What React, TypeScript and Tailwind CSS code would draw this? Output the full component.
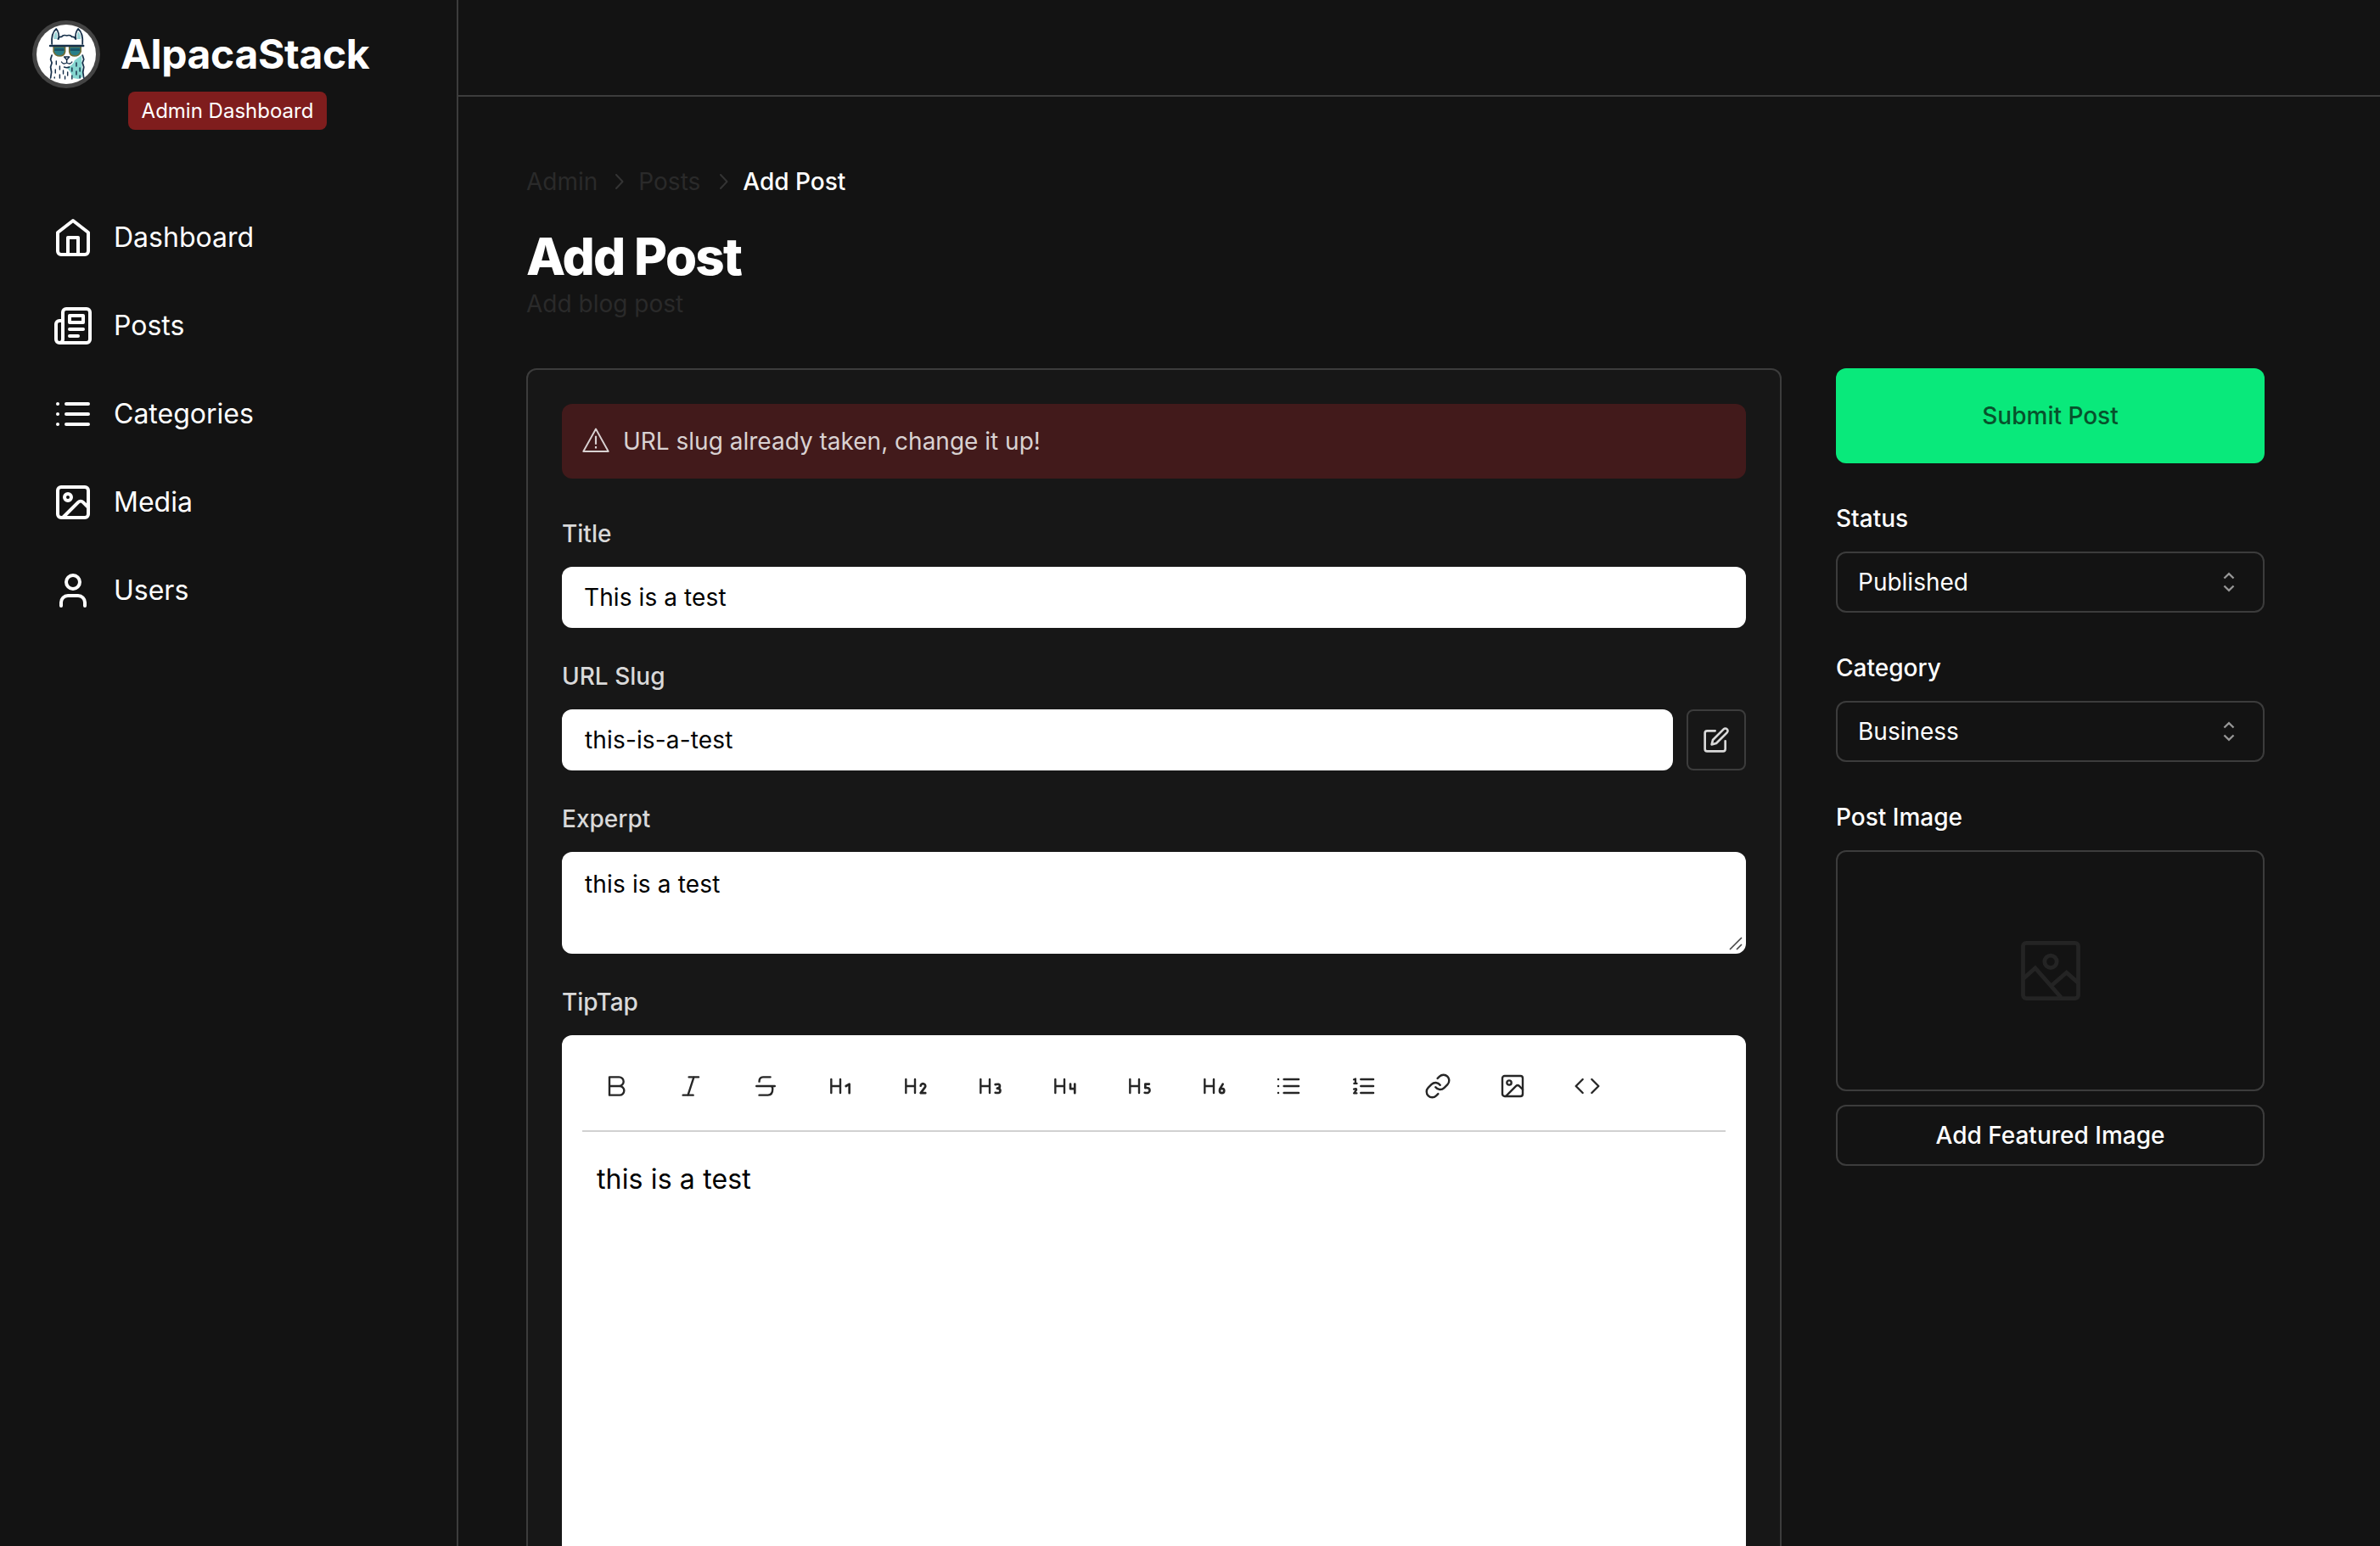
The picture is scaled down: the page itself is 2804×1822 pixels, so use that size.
import React from "react";

const Svg = ({ size, sw = 2, children, cls = "" }: { size: number; sw?: number; children: React.ReactNode; cls?: string }) => (
  <svg width={size} height={size} viewBox="0 0 24 24" fill="none" stroke="currentColor" strokeWidth={sw} strokeLinecap="round" strokeLinejoin="round" className={"shrink-0 " + cls}>
    {children}
  </svg>
);

const ImageShapes = () => (
  <>
    <rect width="18" height="18" x="3" y="3" rx="2" />
    <circle cx="9" cy="9" r="2" />
    <path d="m21 15-3.086-3.086a2 2 0 0 0-2.828 0L6 21" />
  </>
);

const ListShapes = () => <path d="M8 6h13M8 12h13M8 18h13M3 6h.01M3 12h.01M3 18h.01" />;

const Alpaca = () => (
  <svg width="70" height="70" viewBox="0 0 70 70" fill="none" strokeLinecap="round" strokeLinejoin="round">
    <circle cx="35" cy="35" r="35" fill="#fff" />
    <g transform="translate(-.4 0) scale(1.030 1)">
      <path d="M34 50q8-1 10-8l8-6l1 26l-5 2l-6-1q-2-8-8-13z" fill="#86d6d0" />
      <path d="M20 17q0-6 3-9q2 4 1 9zM51 17q0-6-3-9q-2 4-1 9z" fill="#9ad3d6" />
      <g stroke="#16304a" strokeWidth="1.700">
        <path d="M18 23q-1-13 5-18q4 5 2.500 12M53 23q1-13-5-18q-4 5-2.500 12" />
        <path d="M25 17q1-3 4-2.500q2-3 6-1.500q4-1.500 6 1.500q3-.5 4 2.500" />
        <path d="M18 36l-1.500 5l1.500 4l-1.500 5l1 6l-1 7M53 36l1.500 5l-1.500 4l1.500 5l-1 6l1 7" />
      </g>
      <g stroke="#16304a" strokeWidth="1.400">
        <path d="M32 38h6l-3 3.500zM35 42v3M29 44q2 3.500 6 1q4 2.500 6-1M32 50q3 1.500 6 0" />
        <path d="M23 43v4M27 49v4M22 53v4M31 54v4M27 59v4M36 56v4M41 51v4M46 45v4M41 60v4M46 55v4M33 61v3M50 51v4M21 62v1M50 60v3" />
      </g>
      <path d="M20 26h13v6q-1 5-6 5t-7-5zM38 26h13v6q-2 5-7 5t-6-5z" fill="#2a7f88" stroke="#6f6b33" strokeWidth="1.600" />
      <path d="M21 28h11v3h-11zM39 28h11v3h-11z" fill="#1b5468" />
      <path d="M16 25h38" stroke="#16304a" strokeWidth="2.400" />
    </g>
  </svg>
);

const nav = [
  { label: "Dashboard", icon: <><path d="m3 9 9-7 9 7v11a2 2 0 0 1-2 2H5a2 2 0 0 1-2-2z" /><path d="M9 22V12h6v10" /></> },
  { label: "Posts", icon: <><path d="M4 22h16a2 2 0 0 0 2-2V4a2 2 0 0 0-2-2H8a2 2 0 0 0-2 2v16a2 2 0 0 1-2 2Zm0 0a2 2 0 0 1-2-2v-9c0-1.1.9-2 2-2h2" /><path d="M18 14h-8M15 18h-5M10 6h8v4h-8V6Z" /></> },
  { label: "Categories", icon: <ListShapes /> },
  { label: "Media", icon: <ImageShapes /> },
  { label: "Users", icon: <><path d="M19 21v-2a4 4 0 0 0-4-4H9a4 4 0 0 0-4 4v2" /><circle cx="12" cy="7" r="4" /></> },
];

/* Heading levels, drawn beside the H stem in the toolbar icons */
const levels = [
  "M17 12l3-1.800v7.900",
  "M17 11.800a2.100 2 0 1 1 3.700 1.400L17 18.100h4.200",
  "M17 10.600q4-1 4 1.200q0 2-2.400 2.200q2.800.1 2.800 2.100q0 2.600-4.400 1.700",
  "M17.300 10.200v4.200h3.900M21.200 10.200v7.900",
  "M20.900 10.200h-3.400v3.400q3.900-.5 3.900 2.100q0 3-4.400 2.100",
  "M20 10.200l-2.700 4.500M19.200 18.100a2 2 0 1 0 0-4a2 2 0 0 0 0 4z",
];

const tools: { sw: number; icon: React.ReactNode }[] = [
  { sw: 1.8, icon: <path d="M6 4h8.500a4 4 0 0 1 0 8H6zM6 12h9a4 4 0 0 1 0 8H6z" /> },
  { sw: 1.8, icon: <path d="M10.200 4h8.600M5 20h9M14.600 4l-5.200 16" /> },
  { sw: 1.8, icon: <path d="M16.200 4H10Q6.400 4 6.400 8M3.900 12h16.200M15 12h1.500q1.700 0 1.700 2.500Q18.200 20 14 20H6.400" /> },
  ...levels.map((d) => ({ sw: 1.8, icon: <><path d="M4 6v12M12 6v12M4 12h8" /><path d={d} strokeWidth="2" /></> })),
  { sw: 1.9, icon: <ListShapes /> },
  { sw: 1.9, icon: <><path d="M10 6h11M10 12h11M10 18h11" /><path d="M3.800 6.200 5.200 5.600v4M4 9.700h2.400M3.800 14.700q2.600-1 2.200.7L3.900 18.300h2.400" strokeWidth="1.700" /></> },
  { sw: 1.8, icon: <path d="M10 13a5 5 0 0 0 7.540.54l3-3a5 5 0 0 0-7.070-7.070l-1.720 1.710M14 11a5 5 0 0 0-7.540-.54l-3 3a5 5 0 0 0 7.070 7.070l1.710-1.710" /> },
  { sw: 1.8, icon: <ImageShapes /> },
  { sw: 1.8, icon: <path d="m16 18 6-6-6-6M8 6l-6 6 6 6" /> },
];

const Crumb = () => (
  <svg width="30" height="30" viewBox="0 0 15 15" fill="#343434">
    <path d="M6.158 3.135a.5.5 0 0 1 .707.023l3.750 4a.5.5 0 0 1 0 .684l-3.750 4a.5.5 0 1 1-.73-.684L9.566 7.500 6.135 3.842a.5.5 0 0 1 .023-.707Z" />
  </svg>
);

const Label = ({ children, cls = "mt-[45px]" }: { children: string; cls?: string }) => (
  <div className={"mb-[19px] h-10 text-[28px] leading-10 font-medium " + cls}>{children}</div>
);

const Select = ({ value }: { value: string }) => (
  <div className="flex h-[72px] items-center justify-between rounded-xl border-2 border-[#3c3c3c] px-6 text-[28px]">
    <span>{value}</span>
    <svg width="32" height="32" viewBox="0 0 15 15" fill="none" stroke="#969696" strokeWidth="1.100">
      <path d="M4.900 5.400 7.500 2.900 10.100 5.400M4.900 9.600 7.500 12.100 10.100 9.600" />
    </svg>
  </div>
);

export default function App() {
  return (
    <div className="flex h-[1822px] w-[2804px] overflow-hidden bg-[#131313] font-['Inter',sans-serif] text-white">
      <aside className="w-[540px] shrink-0 border-r-2 border-[#3c3c3c]">
        <div className="flex pt-6 pl-[38px]">
          <div className="flex size-20 shrink-0 items-center justify-center rounded-full bg-[#444]">
            <Alpaca />
          </div>
          <div className="ml-6 pt-3">
            <div className="h-[60px] text-[48px] leading-[56px] font-bold tracking-[-.35px]">AlpacaStack</div>
            <div className="mt-3 ml-[9px] flex h-[45px] w-[234px] items-center justify-center rounded-lg bg-[#7f1d1d] text-[24px]">Admin Dashboard</div>
          </div>
        </div>
        <nav className="mt-[75px] flex flex-col">
          {nav.map((n) => (
            <div key={n.label} className="flex h-[104px] items-center pl-[62px] text-[32px]">
              <Svg size={48}>{n.icon}</Svg>
              <span className="ml-6">{n.label}</span>
            </div>
          ))}
        </nav>
      </aside>

      <div className="flex flex-1 flex-col">
        <header className="h-[114px] shrink-0 border-b-2 border-[#3c3c3c]" />
        <main className="pl-20">
          <div className="mt-20 flex h-10 items-center text-[28px] text-[#2a2a2a]">
            <span>Admin</span>
            <span className="mr-[9px] ml-[9px]"><Crumb /></span>
            <span>Posts</span>
            <span className="mr-[9px] ml-[11px]"><Crumb /></span>
            <span className="font-medium text-white">Add Post</span>
          </div>
          <h1 className="mt-8 h-[72px] text-[60px] leading-[72px] font-extrabold tracking-[-1.700px]">Add Post</h1>
          <p className="h-10 text-[28px] leading-10 text-[#2a2a2a]">Add blog post</p>

          <div className="mt-14 flex gap-16">
            <section className="h-[1500px] w-[1479px] rounded-xl border-2 border-[#3c3c3c] bg-[#171717] p-10">
              <div className="flex h-[88px] items-center rounded-xl bg-[#421a1b] pl-6 text-[28px] text-[#d9d2d2]">
                <svg width="32" height="32" viewBox="0 0 15 15" fill="none" stroke="currentColor" strokeWidth=".9" strokeLinejoin="round" className="mb-[3px]">
                  <path d="M7.500 1.200 14.400 13.600H.6z" />
                  <path d="M7.500 5v4.700M7.500 10.800v1.100" strokeWidth="1" />
                </svg>
                <span className="ml-4">URL slug already taken, change it up!</span>
              </div>

              <Label cls="mt-[45px] text-[#d9d9d9]">Title</Label>
              <div className="flex h-[72px] items-center rounded-xl bg-white pl-[26px] text-[28px] tracking-[.1px] text-black">This is a test</div>

              <Label cls="mt-[37px] text-[#d9d9d9]">URL Slug</Label>
              <div className="flex gap-4">
                <div className="flex h-[72px] flex-1 items-center rounded-xl bg-white pl-[27px] text-[28px] tracking-[.15px] text-black">this-is-a-test</div>
                <div className="flex h-[72px] w-[70px] items-center justify-center rounded-lg border-2 border-[#3c3c3c] text-[#d9d9d9]">
                  <Svg size={32}>
                    <path d="M11 4H4a2 2 0 0 0-2 2v14a2 2 0 0 0 2 2h14a2 2 0 0 0 2-2v-7" />
                    <path d="M18.500 2.500a2.120 2.120 0 0 1 3 3L12 15l-4 1 1-4Z" />
                  </Svg>
                </div>
              </div>

              <Label cls="mt-[37px] text-[#d9d9d9]">Experpt</Label>
              <div className="relative h-[120px] rounded-xl bg-white pt-[18px] pl-[27px] text-[28px] leading-10 tracking-[.15px] text-black">
                this is a test
                <svg width="18" height="18" viewBox="0 0 18 18" stroke="#444" strokeWidth="1.600" className="absolute right-[2px] bottom-[2px]">
                  <path d="M1 15 15 1M9 15l6-6" />
                </svg>
              </div>

              <Label cls="mt-[37px] text-[#d9d9d9]">TipTap</Label>
              <div className="h-[900px] rounded-xl bg-white px-6 text-black">
                <div className="flex h-[114px] items-center border-b-2 border-[#d1d1d1] pt-2">
                  {tools.map((t, i) => (
                    <div key={i} className="flex w-[88px] shrink-0 items-center pl-6 text-[#262626]">
                      <Svg size={32} sw={t.sw}>{t.icon}</Svg>
                    </div>
                  ))}
                </div>
                <p className="mt-8 ml-[17px] text-[32px] leading-[48px] tracking-[.15px]">this is a test</p>
              </div>
            </section>

            <section className="w-[505px]">
              <div className="flex h-28 items-center justify-center rounded-xl bg-[#09e97b] text-[28px] font-medium text-[#07522c]">Submit Post</div>
              <Label>Status</Label>
              <Select value="Published" />
              <Label>Category</Label>
              <Select value="Business" />
              <Label>Post Image</Label>
              <div className="flex h-[284px] items-center justify-center rounded-xl border-2 border-[#3c3c3c] text-[#242424]">
                <svg width="80" height="80" viewBox="0 0 15 15" fill="none" stroke="currentColor" strokeWidth=".9">
                  <rect x="1.400" y="1.400" width="12.200" height="12.200" rx=".7" />
                  <circle cx="7.500" cy="5.500" r="1.350" />
                  <path d="M1.400 9.300 4.100 6.900 9.800 13.400M7.900 10.600 11 7.900 13.600 10.200" />
                </svg>
              </div>
              <div className="mt-4 flex h-[72px] items-center justify-center rounded-xl border-2 border-[#3c3c3c] text-[28px] font-medium">Add Featured Image</div>
            </section>
          </div>
        </main>
      </div>
    </div>
  );
}
